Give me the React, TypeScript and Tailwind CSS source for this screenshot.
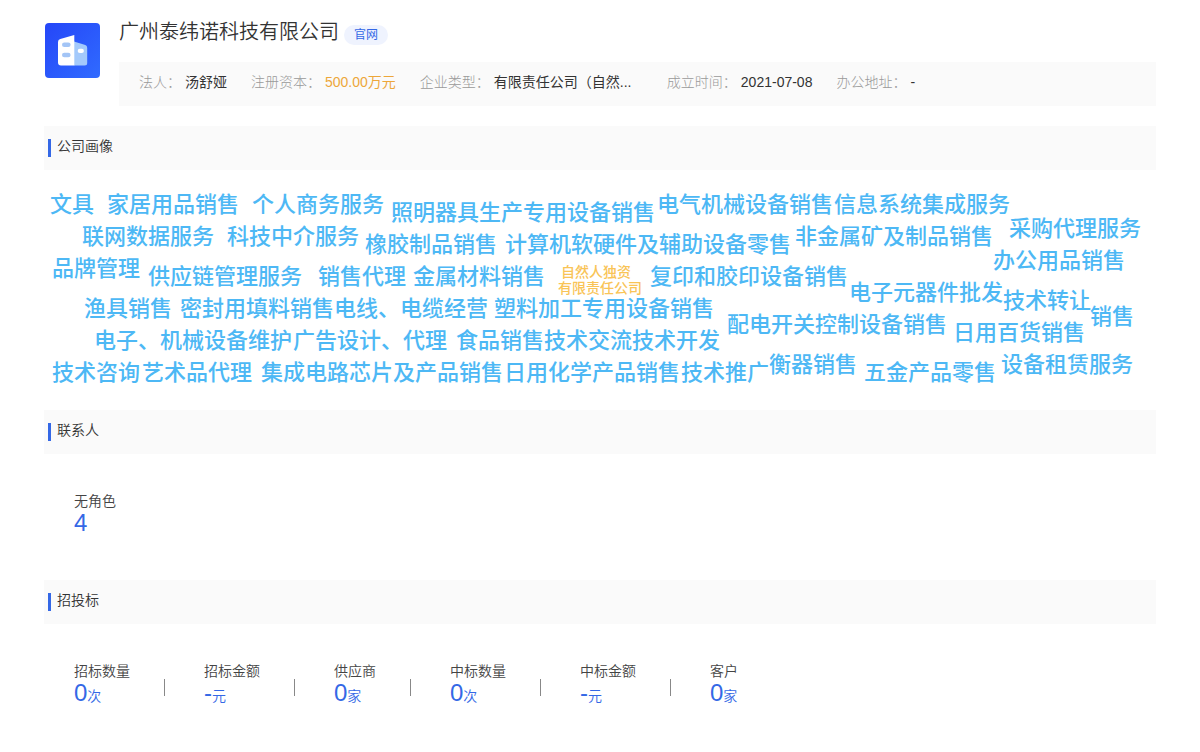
import type { ReactNode } from 'react';

type Word = { text: string; x: number; y: number; small?: boolean };

// Word cloud — x / y is the top-left of each word on the cloud's free canvas.
const words: Word[] = [
  { text: '文具', x: 6, y: 23 },
  { text: '家居用品销售', x: 63, y: 23 },
  { text: '个人商务服务', x: 208, y: 23 },
  { text: '照明器具生产专用设备销售', x: 347, y: 31 },
  { text: '电气机械设备销售', x: 613, y: 23 },
  { text: '信息系统集成服务', x: 790, y: 23 },
  { text: '采购代理服务', x: 965, y: 47 },
  { text: '联网数据服务', x: 38, y: 55 },
  { text: '科技中介服务', x: 183, y: 55 },
  { text: '橡胶制品销售', x: 321, y: 63 },
  { text: '计算机软硬件及辅助设备零售', x: 461, y: 63 },
  { text: '非金属矿及制品销售', x: 751, y: 55 },
  { text: '办公用品销售', x: 949, y: 79 },
  { text: '品牌管理', x: 8, y: 87 },
  { text: '供应链管理服务', x: 104, y: 95 },
  { text: '销售代理', x: 274, y: 95 },
  { text: '金属材料销售', x: 369, y: 95 },
  { text: '自然人独资', x: 517, y: 94, small: true },
  { text: '有限责任公司', x: 514, y: 110, small: true },
  { text: '复印和胶印设备销售', x: 606, y: 95 },
  { text: '电子元器件批发', x: 805, y: 111 },
  { text: '技术转让', x: 959, y: 119 },
  { text: '销售', x: 1046, y: 135 },
  { text: '渔具销售', x: 40, y: 127 },
  { text: '密封用填料销售', x: 136, y: 127 },
  { text: '电线、电缆经营', x: 290, y: 127 },
  { text: '塑料加工专用设备销售', x: 450, y: 127 },
  { text: '配电开关控制设备销售', x: 683, y: 143 },
  { text: '日用百货销售', x: 909, y: 151 },
  { text: '电子、机械设备维护', x: 50, y: 159 },
  { text: '广告设计、代理', x: 249, y: 159 },
  { text: '食品销售', x: 412, y: 159 },
  { text: '技术交流', x: 500, y: 159 },
  { text: '技术开发', x: 588, y: 159 },
  { text: '技术咨询', x: 8, y: 191 },
  { text: '艺术品代理', x: 98, y: 191 },
  { text: '集成电路芯片及产品销售', x: 217, y: 191 },
  { text: '日用化学产品销售', x: 460, y: 191 },
  { text: '技术推广', x: 637, y: 191 },
  { text: '衡器销售', x: 725, y: 183 },
  { text: '五金产品零售', x: 820, y: 191 },
  { text: '设备租赁服务', x: 957, y: 183 },
];

const facts = [
  { label: '法人：', value: '汤舒娅' },
  { label: '注册资本：', value: '500.00万元', accent: true },
  { label: '企业类型：', value: '有限责任公司（自然...', wide: true },
  { label: '成立时间：', value: '2021-07-08' },
  { label: '办公地址：', value: '-' },
];

const bids = [
  { label: '招标数量', value: '0', unit: '次' },
  { label: '招标金额', value: '-', unit: '元' },
  { label: '供应商', value: '0', unit: '家' },
  { label: '中标数量', value: '0', unit: '次' },
  { label: '中标金额', value: '-', unit: '元' },
  { label: '客户', value: '0', unit: '家' },
];

function Logo() {
  return (
    <svg viewBox="0 0 55 55" className="mt-[23px] h-[55px] w-[55px] shrink-0" aria-hidden="true">
      <defs>
        <linearGradient id="logo-bg" x1="0" y1="0" x2="1" y2="1">
          <stop offset="0" stopColor="#2546f8" />
          <stop offset="1" stopColor="#306bff" />
        </linearGradient>
      </defs>
      <rect width="55" height="55" rx="4" fill="url(#logo-bg)" />
      <path d="M29 18.5l11.3 3.6q1.9.6 1.9 2.6V40q0 2.5-2.5 2.5H29z" fill="#a3c9fb" />
      <path d="M29.3 12v30.5H16q-3 0-3-3V19q0-2.4 2.3-3z" fill="#fff" />
      <rect x="17" y="19.5" width="8.6" height="4.6" rx="2.3" fill="#a3c5f6" />
      <rect x="17" y="29.7" width="8.6" height="4.6" rx="2.3" fill="#a3c5f6" />
      <rect x="32.7" y="25.8" width="6.2" height="4.2" rx="2.1" fill="#fff" />
    </svg>
  );
}

function Section({ title, children }: { title: string; children: ReactNode }) {
  return (
    <section>
      <div className="h-11 bg-[#fafafa] px-1 pt-[13px]">
        <h2 className="flex h-[18px] border-l-3 border-[#3468e6] pl-1.5 text-sm leading-[14px] font-[350] text-[#333]">
          {title}
        </h2>
      </div>
      {children}
    </section>
  );
}

function Stat({ label, value, unit }: { label: string; value: string; unit?: string }) {
  return (
    <div>
      <dt className="text-sm leading-5 font-[350] text-[#444]">{label}</dt>
      <dd className="text-2xl leading-6 font-[350] text-[#3468e6]">
        {value}
        {unit && <span className="text-sm leading-6">{unit}</span>}
      </dd>
    </div>
  );
}

export default function App() {
  return (
    <main className="bg-white px-11 font-['Liberation_Sans','Noto_Sans_CJK_SC',sans-serif] text-[#333]">
      <header className="flex gap-[19px] pl-px">
        <Logo />
        <div className="min-w-0 flex-1 pt-4">
          <div className="flex h-[46px] items-start gap-[5px]">
            <h1 className="text-xl leading-8 font-[350]">广州泰纬诺科技有限公司</h1>
            <a
              href="#"
              className="mt-[9px] rounded-full bg-[#eff3fe] px-2.5 text-xs leading-5 text-[#3468e6]"
            >
              官网
            </a>
          </div>
          <dl className="flex h-11 gap-6 bg-[#fafafa] px-5 text-sm leading-10">
            {facts.map((f) => (
              <div key={f.label} className="flex gap-1">
                <dt className="w-max shrink-0 font-light text-[#999]">{f.label}</dt>
                <dd
                  className={
                    f.accent
                      ? 'whitespace-nowrap text-[#eda73a]'
                      : f.wide
                        ? 'w-[149px] whitespace-nowrap'
                        : 'whitespace-nowrap'
                  }
                >
                  {f.value}
                </dd>
              </div>
            ))}
          </dl>
        </div>
      </header>

      <div className="pt-5">
        <Section title="公司画像">
          <div className="relative h-60">
            {words.map((w) => (
              <span
                key={w.text}
                style={{ left: w.x, top: w.y }}
                className={
                  w.small
                    ? 'absolute text-sm leading-4 font-medium whitespace-nowrap text-[#f9c457]'
                    : 'absolute text-[22px] leading-6 font-medium whitespace-nowrap text-[#4db8f5]'
                }
              >
                {w.text}
              </span>
            ))}
          </div>
        </Section>

        <Section title="联系人">
          <dl className="flex px-[30px] pt-[37px] pb-[45px]">
            <Stat label="无角色" value="4" />
          </dl>
        </Section>

        <Section title="招投标">
          <dl className="flex px-[30px] pt-[37px] pb-11">
            {bids.map((b, i) => (
              <div key={b.label} className="flex">
                {i > 0 && <div className="mr-[39px] ml-[34px] mt-[18px] h-[17px] w-px bg-[#888]" />}
                <Stat {...b} />
              </div>
            ))}
          </dl>
        </Section>
      </div>
    </main>
  );
}
